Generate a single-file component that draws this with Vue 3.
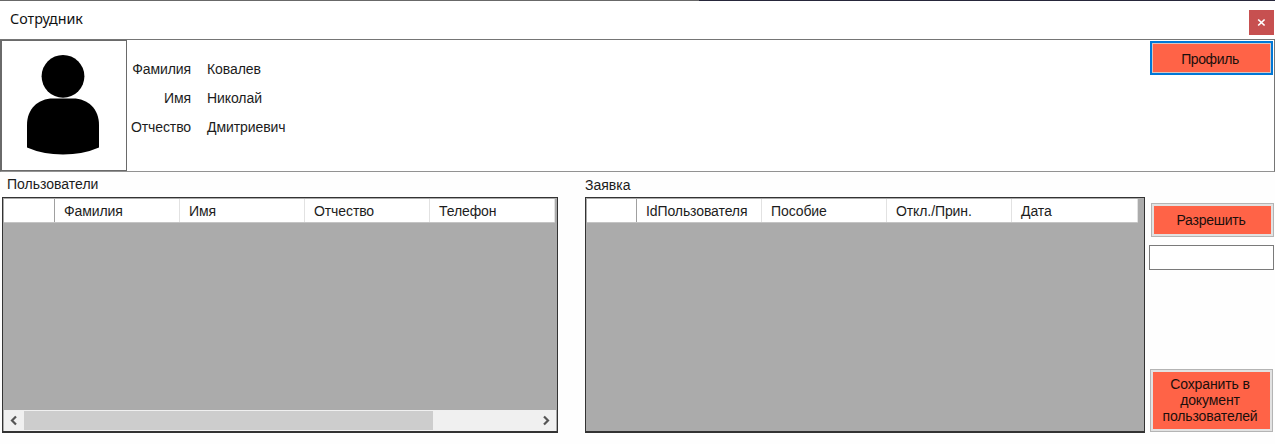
<script setup>
const person = [
  { label: 'Фамилия', value: 'Ковалев' },
  { label: 'Имя', value: 'Николай' },
  { label: 'Отчество', value: 'Дмитриевич' },
]
const userColumns = ['Фамилия', 'Имя', 'Отчество', 'Телефон']
const requestColumns = ['IdПользователя', 'Пособие', 'Откл./Прин.', 'Дата']
</script>

<template>
  <div class="window">
    <header class="titlebar">
      <span class="title">Сотрудник</span>
      <button class="close" aria-label="Закрыть">
        <svg width="9" height="9" viewBox="0 0 9 9"><path d="M1.200 1.500 7.600 7.500M7.600 1.500 1.200 7.500" stroke="#fff" stroke-width="1.700" /></svg>
      </button>
    </header>

    <section class="profile">
      <div class="avatar">
        <svg width="76" height="104" viewBox="0 0 76 104">
          <circle cx="38" cy="23.300" r="21.400" />
          <path d="M2 94.500V72C2 56 13 45.500 28 45.500H48C63 45.500 74 56 74 72V94.500Q58 101.500 38 101.500T2 94.500Z" />
        </svg>
      </div>
      <dl class="person">
        <template v-for="row in person" :key="row.label">
          <dt>{{ row.label }}</dt>
          <dd>{{ row.value }}</dd>
        </template>
      </dl>
      <button class="btn focused">Профиль</button>
    </section>

    <main class="content">
      <section class="block users">
        <h2>Пользователи</h2>
        <div class="grid">
          <div class="head">
            <span class="corner"></span>
            <span v-for="c in userColumns" :key="c" class="cell">{{ c }}</span>
          </div>
          <div class="scroll">
            <svg class="arrow" width="20" height="20" viewBox="0 0 20 20"><path d="M12 6.500 8 10.500 12 14.500" /></svg>
            <div class="track"><div class="thumb"></div></div>
            <svg class="arrow" width="20" height="20" viewBox="0 0 20 20"><path d="M8 6.500 12 10.500 8 14.500" /></svg>
          </div>
        </div>
      </section>

      <section class="block requests">
        <h2>Заявка</h2>
        <div class="grid">
          <div class="head">
            <span class="corner"></span>
            <span v-for="c in requestColumns" :key="c" class="cell">{{ c }}</span>
          </div>
        </div>
      </section>

      <aside class="actions">
        <button class="btn allow">Разрешить</button>
        <input class="field" type="text" />
        <button class="btn save">Сохранить в<br />документ<br />пользователей</button>
      </aside>
    </main>
  </div>
</template>

<style>
body {
  margin: 0;
  background: #fefefe;
}
</style>

<style scoped>
* {
  box-sizing: border-box;
}
.window {
  width: 1275px;
  height: 444px;
  overflow: hidden;
  background: #fefefe;
  color: #1c1c1c;
  font-family: "Liberation Sans", Arial, sans-serif;
  font-size: 14px;
  line-height: 16px;
}
.titlebar {
  height: 39px;
  display: flex;
  justify-content: space-between;
  background: linear-gradient(90deg, #686868 699px, #26263a 699px) top / 100% 1px no-repeat #fff;
}
.title {
  margin: 10px 0 0 10px;
  font: 14.3px/18px "Noto Sans", sans-serif;
  color: #111;
}
.close {
  width: 25px;
  height: 25px;
  margin: 10px 1px 0 0;
  padding: 0;
  border: 0;
  background: #c75050;
  display: flex;
  align-items: center;
  justify-content: center;
}
.profile {
  height: 133px;
  display: flex;
  border: 1px solid #757575;
  border-bottom-color: #929292;
  background: #fff;
}
.avatar {
  width: 127px;
  height: 131px;
  flex: none;
  margin-left: -1px;
  padding: 0 2px 2px 0;
  border: 1px solid #6a6a6a;
  border-left-width: 2px;
  display: flex;
  align-items: center;
  justify-content: center;
}
.person {
  flex: 1;
  margin: 14px 0 0 3px;
  display: grid;
  grid-template-columns: 61px 1fr;
  grid-auto-rows: 29px;
  column-gap: 16px;
  align-content: start;
  align-items: center;
}
.person dt {
  text-align: right;
  letter-spacing: -0.1px;
}
.person dd {
  margin: 0;
  letter-spacing: -0.08px;
}
.btn {
  display: block;
  padding: 0;
  font: inherit;
  letter-spacing: -0.25px;
  color: #1b0f0c;
  background: #ff6347;
  border: 1px solid #b4b4b4;
  box-shadow: inset 0 0 0 2px #e2e2e2;
  text-align: center;
}
.focused {
  width: 123px;
  height: 34px;
  margin: 1px 1px 0 0;
  padding: 1px 3px 0 0;
  border: 2px solid #0078d7;
  box-shadow: inset 0 0 0 1px #d8c4c0;
  letter-spacing: -0.4px;
}
.content {
  height: 261px;
  display: flex;
  padding-left: 2px;
}
.block h2 {
  margin: 0;
  height: 25px;
  padding: 4px 0 0 5px;
  font-size: 14px;
  font-weight: 400;
  line-height: 16px;
}
.users {
  width: 556px;
  margin-right: 27px;
}
.requests {
  width: 560px;
}
.requests h2 {
  padding: 5px 0 0;
}
.grid {
  height: 236px;
  display: flex;
  flex-direction: column;
  justify-content: space-between;
  border: 1px solid #333;
  border-bottom-width: 2px;
  background: #ababab;
  padding: 1px 1px 0;
}
.head {
  width: 551px;
  height: 24px;
  display: flex;
  background: #fff;
  border-bottom: 1px solid #c4c4c4;
}
.corner {
  width: 51px;
  border-right: 1px solid #a0a0a0;
}
.cell {
  width: 125px;
  padding: 4px 0 0 9px;
  border-right: 1px solid #e2e2e2;
  letter-spacing: -0.1px;
  white-space: nowrap;
}
.requests .corner {
  width: 50px;
}
.requests .cell:last-child {
  width: 126px;
}
.scroll {
  height: 21px;
  display: flex;
  background: #f0f0f0;
}
.arrow {
  flex: none;
  fill: none;
  stroke: #555;
  stroke-width: 2.2;
}
.track {
  flex: 1;
}
.thumb {
  width: 409px;
  height: 19px;
  margin-top: 1px;
  background: #cdcdcd;
}
.actions {
  width: 125px;
  margin-left: 4px;
  display: flex;
  flex-direction: column;
}
.allow {
  width: 123px;
  height: 34px;
  margin: 31px 0 0 2px;
  padding-right: 3px;
}
.field {
  width: 125px;
  height: 25px;
  margin-top: 8px;
  padding: 2px 4px;
  border: 1px solid #7a7a7a;
  background: #fff;
  font: inherit;
}
.save {
  width: 123px;
  height: 63px;
  margin: 99px 0 0 1px;
  padding: 0 3px 2px 0;
  letter-spacing: -0.12px;
}
</style>
